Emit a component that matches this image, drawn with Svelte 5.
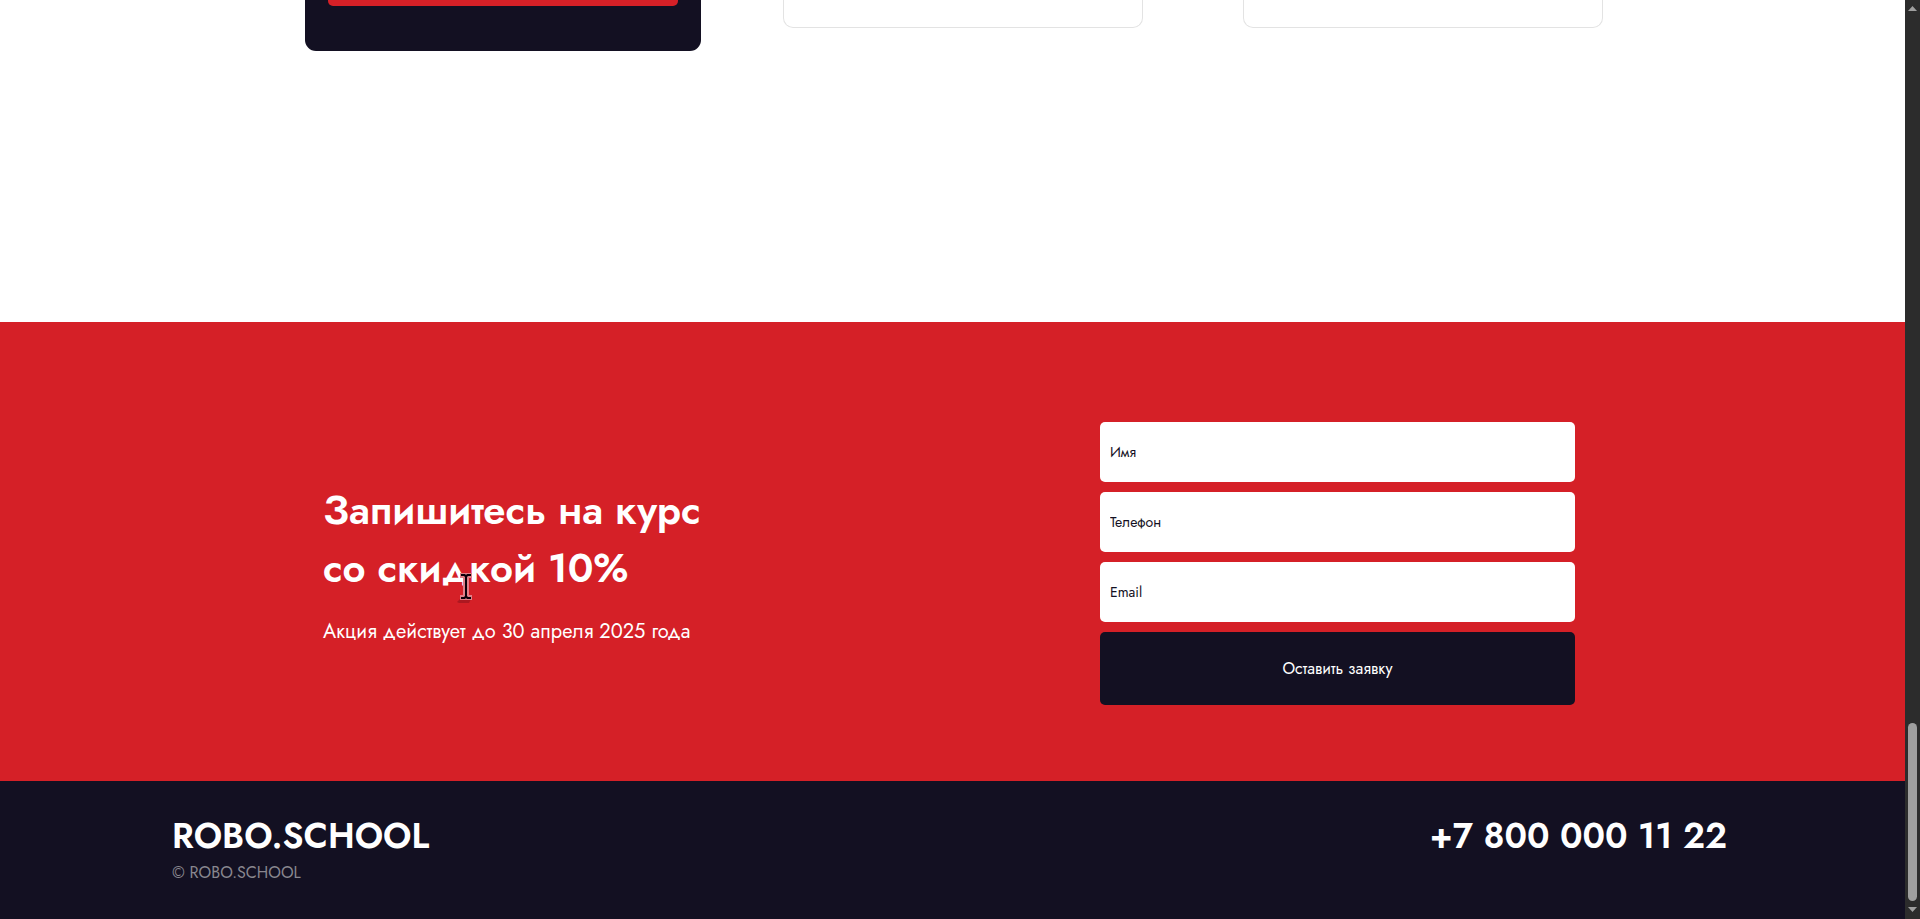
<script>
  const fields = [
    { id: 'name', label: 'Имя', type: 'text' },
    { id: 'phone', label: 'Телефон', type: 'tel' },
    { id: 'email', label: 'Email', type: 'email' }
  ];
</script>

<div class="window">
  <div class="page">
    <section class="plans">
      <article class="plan featured"><div class="plan-action"></div></article>
      <article class="plan"></article>
      <article class="plan"></article>
    </section>

    <section class="signup">
      <div class="offer">
        <h2>Запишитесь на курс<br />со скидкой 10%</h2>
        <p>Акция действует до 30 апреля 2025 года</p>
        <svg class="cursor" viewBox="0 0 18 32" width="18" height="32" aria-hidden="true">
          <path d="M0 30 L3 27 H14 L12 31 H2 Z" fill="#7d1018" opacity=".45" />
          <path d="M3 1 H15 V6 H12 V23 H15 V28 H3 V23 H6 V6 H3 Z" fill="#e08088" />
          <path d="M4 2 H8 L9 3 L10 2 H14 V4 H11 L10 5 V24 L11 25 H14 V27 H10 L9 26 L8 27 H4 V25 H7 L8 24 V5 L7 4 H4 Z" fill="#0a0008" />
          <path d="M8 4 H10 V25 H8 Z" fill="#0a0008" />
        </svg>
      </div>
      <form onsubmit={(event) => event.preventDefault()}>
        {#each fields as field}
          <input id={field.id} name={field.id} type={field.type} placeholder={field.label} aria-label={field.label} />
        {/each}
        <button type="submit">Оставить заявку</button>
      </form>
    </section>

    <footer>
      <div>
        <a class="brand" href="#top">ROBO.SCHOOL</a>
        <p class="copyright">© ROBO.SCHOOL</p>
      </div>
      <a class="brand" href="tel:+78000001122">+7 800 000 11 22</a>
    </footer>
  </div>

  <div class="scrollbar" aria-hidden="true">
    <svg viewBox="0 0 9 5" width="9" height="5"><path d="M0 5 L4.500 0 L9 5 Z" fill="#9f9f9f" /></svg>
    <div class="thumb"></div>
    <svg viewBox="0 0 9 5" width="9" height="5"><path d="M0 0 H9 L4.500 5 Z" fill="#9f9f9f" /></svg>
  </div>
</div>

<style>
  :global(body) {
    margin: 0;
    background: #fff;
  }

  .window {
    display: flex;
    min-height: 100vh;
    font-family: Jost, Lato, sans-serif;
    color: #fff;
  }

  .page {
    flex: 1;
    min-width: 0;
    display: flex;
    flex-direction: column;
  }

  .plans {
    display: grid;
    grid-template-columns: repeat(3, minmax(0, 360px));
    justify-content: center;
    align-items: start;
    gap: 100px;
    padding: 0 0 271px 21px;
  }

  .plan {
    box-sizing: border-box;
    height: 28px;
    border: 1px solid #e3e3e3;
    border-top: 0;
    border-radius: 0 0 10px 10px;
  }

  .featured {
    height: 51px;
    margin: 0 -18px;
    padding: 0 23px;
    border: 0;
    border-radius: 0 0 11px 11px;
    background: #131022;
  }

  .plan-action {
    height: 6px;
    border-radius: 0 0 5px 5px;
    background: #d52027;
  }

  .signup {
    display: grid;
    grid-template-columns: minmax(0, 777px) minmax(0, 475px);
    justify-content: center;
    align-items: center;
    padding: 100px 7px 76px 0;
    background: #d52027;
  }

  .offer {
    position: relative;
  }

  h2 {
    margin: 0 0 21px;
    font-size: 40px;
    font-weight: 600;
    line-height: 58px;
  }

  p {
    margin: 0;
    font-size: 20px;
    line-height: 28px;
  }

  .cursor {
    position: absolute;
    left: 134px;
    top: 91px;
  }

  form {
    display: flex;
    flex-direction: column;
    gap: 10px;
  }

  input {
    box-sizing: border-box;
    width: 100%;
    height: 60px;
    padding: 0 10px;
    border: 0;
    border-radius: 5px;
    background: #fff;
    font: 14px/20px Jost, Lato, sans-serif;
    color: #131022;
  }

  input::placeholder {
    color: #131022;
    opacity: 1;
  }

  button {
    height: 73px;
    border: 0;
    border-radius: 5px;
    background: #131022;
    font: 16px/24px Jost, Lato, sans-serif;
    color: #fff;
  }

  footer {
    flex: 1;
    display: flex;
    justify-content: space-between;
    align-items: flex-start;
    padding: 30px 178px 30px 172px;
    background: #131022;
  }

  .brand {
    display: block;
    font-size: 35px;
    font-weight: 600;
    line-height: 50px;
    color: #fff;
    text-decoration: none;
  }

  .copyright {
    font-size: 16px;
    line-height: 24px;
    color: #89878f;
  }

  .scrollbar {
    box-sizing: border-box;
    width: 15px;
    display: flex;
    flex-direction: column;
    align-items: center;
    padding: 6px 0 7px;
    background: #2c2c2c;
  }

  .thumb {
    width: 9px;
    height: 178px;
    margin: auto 0 6px;
    border-radius: 5px;
    background: #9f9f9f;
  }
</style>
